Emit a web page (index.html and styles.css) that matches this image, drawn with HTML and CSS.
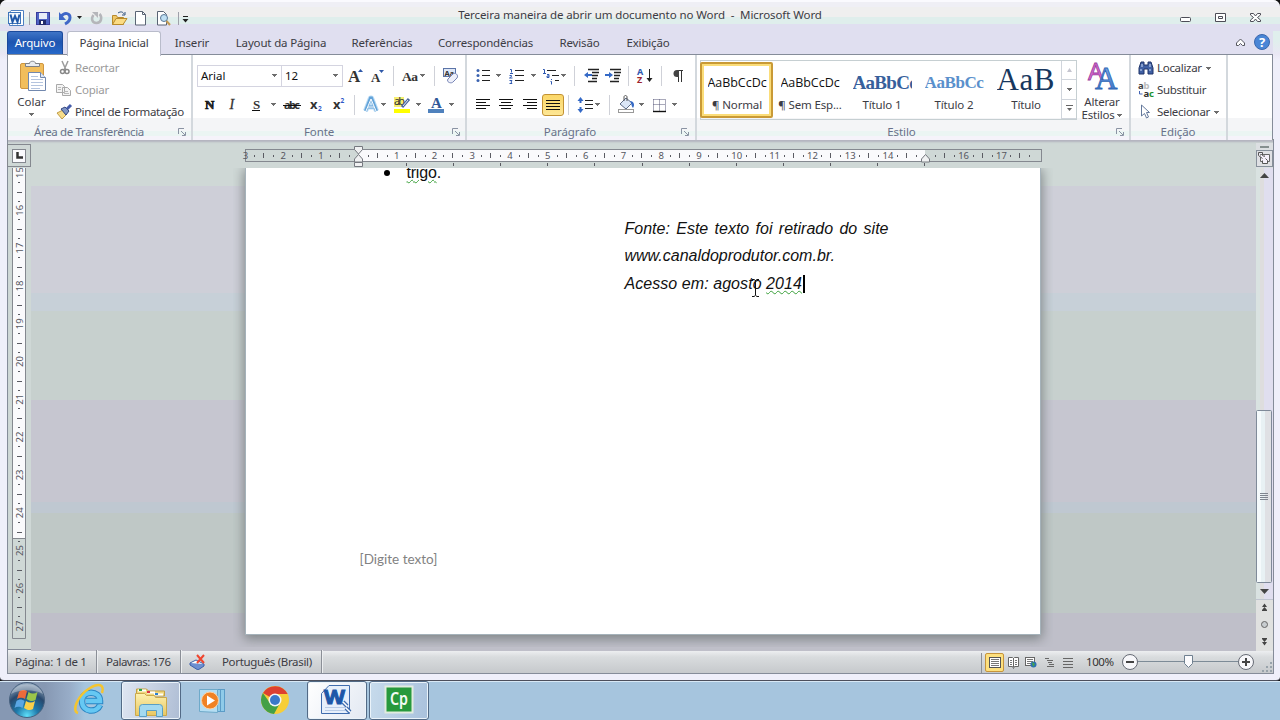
FILE: index.html
```html
<!DOCTYPE html>
<html lang="pt-BR">
<head>
<meta charset="utf-8">
<title>Terceira maneira de abrir um documento no Word - Microsoft Word</title>
<link rel="stylesheet" href="styles.css">
</head>
<body>
<svg width="0" height="0" class="defs">
  <defs>
    <linearGradient id="blueA" x1="0" y1="0" x2="0" y2="1"><stop offset="0" stop-color="#8cb4ea"/><stop offset="1" stop-color="#2f6cc4"/></linearGradient>
    <linearGradient id="folder" x1="0" y1="0" x2="0" y2="1"><stop offset="0" stop-color="#fdf1b0"/><stop offset="1" stop-color="#e8c763"/></linearGradient>
    <radialGradient id="orb" cx=".5" cy=".95" r=".9"><stop offset="0" stop-color="#5fe0fa"/><stop offset=".35" stop-color="#1f7aab"/><stop offset=".7" stop-color="#28486d"/><stop offset="1" stop-color="#8da3ba"/></radialGradient>
    <path id="dd" d="M0 0h5v1h-1v1h-1v1h-1v-1h-1v-1h-1z" fill="#6d6d6d"/>
    <path id="launch" d="M.5 6V.5H6M3 3l4 4M7.5 4v3.500H4" fill="none" stroke="#8a93a3"/>
  </defs>
</svg>
<div class="window">
  <header class="titlebar">
    <div class="quick">
      <svg width="185" height="24" viewBox="7 7 185 24">
        <path d="M11 10.500h12.500v15H9.500v-13z" fill="#fff" stroke="#4f7fc0"/><rect x="8.500" y="12.500" width="12" height="11" fill="#f4f8fd" stroke="#3f75ba"/><path d="M10.500 14.500l2 7.500 2.500-6 2.500 6 2-7.500" stroke="#2259a8" stroke-width="2" fill="none"/>
        <path d="M29.500 12v13" stroke="#9ea0aa"/>
        <rect x="36.500" y="12.500" width="13" height="12" fill="#5064c4" stroke="#3a3d9d"/><rect x="39" y="13" width="8" height="6" fill="#e9edf8"/><rect x="39" y="20" width="7" height="5" fill="#222b6c"/><rect x="41" y="21" width="2" height="3" fill="#fff"/>
        <path d="M61 16.500c4-5 9-3 9 1 0 3-2 5-5 6.500" fill="none" stroke="#4068c8" stroke-width="3"/><path d="M59 12v8h7z" fill="#4068c8"/><path d="M77 16h5l-2.500 3z" fill="#222"/>
        <path d="M93.500 15c-3 4-1 8 3 8 5 0 6-6 3-9" fill="none" stroke="#b5b6ba" stroke-width="2.500"/><path d="M92 12h6v6z" fill="#b5b6ba"/>
        <path d="M112.500 24.500v-9h4l1 2h6v7z" fill="#f0c765" stroke="#b88a2b"/><path d="M112.500 24.500l3.500-6h11l-4 6z" fill="#fbdc84" stroke="#b88a2b"/><path d="M118 13c3-2 5-1 6 1m1-2v3h-3" fill="none" stroke="#33557f"/>
        <path d="M135.500 11.500h7l3 3v10.500h-10z" fill="#fff" stroke="#5a6474"/><path d="M142.500 11.500v3h3" fill="none" stroke="#5a6474"/>
        <path d="M157.500 11.500h6l3 3v10.500h-9z" fill="#fff" stroke="#5a6474"/><circle cx="164" cy="18" r="3.500" fill="#bfe0f4" stroke="#5a7896"/><path d="M166.500 21l3.500 4" stroke="#c49a52" stroke-width="2"/>
        <path d="M178.500 12v13" stroke="#9ea0aa"/><path d="M183 16h5v1h-5zM182.500 19h6l-3 3.500z" fill="#222"/>
      </svg>
    </div>
    <h1>Terceira maneira de abrir um documento no Word&nbsp; -&nbsp; Microsoft Word</h1>
    <svg class="winbtns" width="110" height="24" viewBox="1163 7 110 24" fill="#fff" stroke="#4d4d57">
      <rect x="1180.500" y="17.500" width="10" height="4" rx="1"/>
      <path d="M1215.500 13.500h10v8h-10zM1218.500 16.500h4v2h-4z"/>
      <path d="M1250.500 13.500h3l2 2.500 2-2.500h3v1.500l-3 2.500 3 2.500v1.500h-3l-2-2.500-2 2.500h-3v-1.500l3-2.500-3-2.500z"/>
    </svg>
  </header>
  <nav class="tabs">
    <span class="file">Arquivo</span>
    <span class="tab on">Página Inicial</span>
    <span class="tab t1">Inserir</span>
    <span class="tab t2">Layout da Página</span>
    <span class="tab t3">Referências</span>
    <span class="tab t4">Correspondências</span>
    <span class="tab t5">Revisão</span>
    <span class="tab t6">Exibição</span>
    <svg class="help" width="45" height="23" viewBox="1228 31 45 23">
      <path d="M1236.500 43l4-4 4 4v2.500h-2l-2-2-2 2h-2z" fill="#fff" stroke="#55565f"/>
      <circle cx="1262" cy="42" r="7.500" fill="#4a86d6" stroke="#3a68ad"/><text x="1262" y="47" text-anchor="middle" font-size="13" font-weight="700" fill="#fff">?</text>
    </svg>
  </nav>

  <section class="ribbon">
    <div class="group clip">
      <div class="body">
        <div class="paste">
          <svg width="46" height="40" viewBox="7 54 46 40">
            <rect x="19.500" y="62.500" width="23" height="25" rx="1.500" fill="#f2be5c" stroke="#cf9640"/><path d="M24.500 65.500v-3h4c0-3 6-3 6 0h4v3z" fill="#e8ebf0" stroke="#7c8087"/>
            <path d="M27.500 71.500h12l5 5v13h-17z" fill="#fff" stroke="#7288ae"/><path d="M39.500 71.500v5h5" fill="#dde6f3" stroke="#7288ae"/><path d="M30 75.500h7M30 78.500h12M30 81.500h12M30 84.500h12M30 87.500h9" stroke="#b4c4de"/>
          </svg>
          <span>Colar</span>
          <svg width="5" height="3"><use href="#dd"/></svg>
        </div>
        <div class="stack">
          <div class="cmd off"><svg width="18" height="22" viewBox="55 57 18 22"><path d="M61 61l4 9M67 61l-4 9" stroke="#9b9b9b" stroke-width="1.500"/><circle cx="61.500" cy="71.500" r="2" fill="none" stroke="#888" stroke-width="1.500"/><circle cx="66" cy="71.500" r="2" fill="none" stroke="#888" stroke-width="1.500"/></svg>Recortar</div>
          <div class="cmd off"><svg width="18" height="22" viewBox="56 79 18 22"><path d="M56.500 84.500h6l2 2v6h-8zM62.500 87.500h5l3 3v5h-8z" fill="#f4f4f4" stroke="#a9a9a9"/><path d="M58 87.500h3M58 89.500h3M64 91.500h4M64 93.500h5" stroke="#b9b9b9"/></svg>Copiar</div>
          <div class="cmd"><svg width="18" height="22" viewBox="56 101 18 22"><path d="M57 113l6-3 4 4-5 5z" fill="#f6dc8a" stroke="#c29d46"/><path d="M61 109l4-2 4 4-3 4z" fill="#7f95c4" stroke="#34477e"/><path d="M67 109l4-4" stroke="#445caa" stroke-width="3"/></svg>Pincel de Formatação</div>
        </div>
      </div>
      <footer><span>Área de Transferência</span><svg width="8" height="8"><use href="#launch"/></svg></footer>
    </div>

    <div class="group font">
      <div class="body rows">
        <div class="row r1">
          <div class="combo c1">Arial<svg width="5" height="3"><use href="#dd"/></svg></div>
          <div class="combo c2">12<svg width="5" height="3"><use href="#dd"/></svg></div>
          <svg width="121" height="22" viewBox="343 65 121 22" class="sr">
            <text x="348" y="82" font-size="17" font-weight="700">A</text><path d="M358 72h5l-2.500-3z" fill="#2e58a8"/>
            <text x="371" y="82" font-size="13" font-weight="700">A</text><path d="M379 70h5l-2.500 3z" fill="#2e58a8"/>
            <path d="M393.500 66v20M434.500 66v20" stroke="#cfd1d8"/>
            <text x="402" y="81" font-size="13.500" font-weight="700" textLength="16">Aa</text><use href="#dd" x="420" y="74"/>
            <rect x="443.500" y="68.500" width="12" height="8" fill="#dfe8f7" stroke="#5b74a8"/><text x="444.500" y="76" font-size="7.500" class="sans" font-weight="700">Aa</text><path d="M448 79l5-5c2-2 6 1 4 4l-4 4c-2 2-7 0-5-3z" fill="#eef0fa" stroke="#7583b5"/>
          </svg>
        </div>
        <div class="row r2">
          <svg width="266" height="22" viewBox="197 94 266 22" class="sr">
            <text x="204" y="109" font-size="13" font-weight="700" stroke="#111" stroke-width=".7">N</text>
            <text x="228.500" y="109" font-size="14" font-style="italic" stroke="#333" stroke-width=".3">I</text>
            <text x="252" y="109" font-size="13" font-weight="700">S</text><path d="M251 110.500h8" stroke="#111"/><use href="#dd" x="270" y="103"/>
            <text x="283" y="109" font-size="11" font-weight="700" textLength="16" class="sans">abc</text><path d="M282 105.500h18" stroke="#111"/>
            <text x="309" y="109" font-size="13" class="sans" font-weight="700">x</text><text x="317" y="111" font-size="6.500" fill="#2e58c8" class="sans" font-weight="700">2</text>
            <text x="332" y="109" font-size="13" class="sans" font-weight="700">x</text><text x="339.500" y="103" font-size="6.500" fill="#2e58c8" class="sans" font-weight="700">2</text>
            <path d="M353.500 95v20" stroke="#cfd1d8"/>
            <path d="M364.500 111l5-13h1l5 13M367 107h6.500" fill="none" stroke="#bcdcf5" stroke-width="5" stroke-linejoin="round"/><path d="M364.500 111l5-13h1l5 13M367 107h6.500" fill="none" stroke="#62a3d9" stroke-width="3"/><path d="M365 111l5-12 5 12M367 107h6" fill="none" stroke="#fff"/><use href="#dd" x="380" y="103"/>
            <rect x="393" y="97" width="10" height="10" fill="#f6ee70"/><text x="393" y="105" font-size="11" class="sans" textLength="11">ab</text><path d="M401 107l7-8" stroke="#49679e" stroke-width="3"/><path d="M402 106l5-6" stroke="#e7eaf4"/><rect x="393" y="109" width="16" height="4" fill="#ff0"/><use href="#dd" x="415" y="103"/>
            <text x="430" y="108" font-size="15" fill="#2f5898" font-weight="700">A</text><rect x="427" y="109" width="16" height="4" fill="#4f81bd"/><use href="#dd" x="448" y="103"/>
          </svg>
        </div>
      </div>
      <footer><span>Fonte</span><svg width="8" height="8"><use href="#launch"/></svg></footer>
    </div>

    <div class="group para">
      <div class="body rows">
        <div class="row r1">
          <svg width="219" height="22" viewBox="472 65 219 22" class="lists">
            <g fill="#3a62b0"><circle cx="478" cy="70.500" r="1.500"/><circle cx="478" cy="75.500" r="1.500"/><circle cx="478" cy="80.500" r="1.500"/></g><path d="M482 70.500h8M482 75.500h8M482 80.500h8" stroke="#222"/><use href="#dd" x="496" y="74"/>
            <path d="M510 69.500h1.500v3M510 73.500h3M509.500 75.500h2v1l-2 1.500h3M509.500 80.500h2.500l-1 1.500 1 1.500h-2.500M543 69.500h1.500v4M543 73.500h3M547 74.500h2v3h-2v-1.500h2M551.500 79v1M550.500 81.500h1v3" fill="none" stroke="#2e58b0"/>
            <path d="M515 70.500h9M515 75.500h9M515 80.500h9M547 70.500h9M552 75.500h7M555 80.500h4" stroke="#222"/><use href="#dd" x="531" y="74"/><use href="#dd" x="561" y="74"/>
            <path d="M574.500 66v20M628.500 66v20M661.500 66v20" stroke="#cfd1d8"/>
            <path d="M588 69.500h11M592 72.500h7M592 75.500h6M592 78.500h5M588 81.500h9" stroke="#222" stroke-width="1.300"/><path d="M584 75l4-3v2h4v2h-4v2z" fill="#3469c6"/>
            <path d="M610 69.500h11M614 72.500h7M614 75.500h6M614 78.500h5M610 81.500h9" stroke="#222" stroke-width="1.300"/><path d="M613 75l-4-3v2h-4v2h4v2z" fill="#3469c6"/>
            <text x="637" y="75" font-size="9" font-weight="700" fill="#2e58b0">A</text><text x="637" y="83" font-size="9" font-weight="700" fill="#9c2430">Z</text><path d="M649.500 69v12" stroke="#222"/><path d="M646.500 78h6l-3 4z" fill="#222"/>
            <path d="M677 70.500h6M678.500 70v12M681.500 70v12" stroke="#333"/><path d="M679 70h-2a3.500 3.500 0 0 0 0 7h2z" fill="#444"/>
          </svg>
        </div>
        <div class="row r2">
          <svg width="70" height="22" viewBox="472 94 70 22" stroke="#111"><path d="M476 99.500h14M476 102.500h10M476 105.500h14M476 108.500h10M499 99.500h14M501 102.500h10M499 105.500h14M501 108.500h10M523 99.500h14M527 102.500h10M523 105.500h14M527 108.500h10"/></svg>
          <span class="just"><svg width="14" height="12" stroke="#111"><path d="M0 1.500h14M0 4.500h14M0 7.500h14M0 10.500h14"/></svg></span>
          <svg width="126" height="22" viewBox="564 94 126 22">
            <path d="M568.500 95v20M609.500 95v20" stroke="#cfd1d8"/>
            <path d="M580.500 99v4M580.500 107v4" stroke="#3469c6" stroke-width="2"/><path d="M577.500 101h6l-3-4zM577.500 109h6l-3 4z" fill="#3469c6"/><path d="M585 100.500h8M585 104.500h8M585 108.500h8" stroke="#222"/><use href="#dd" x="595" y="103"/>
            <path d="M620 104l6-6 6 5-6 6z" fill="#dbe6f6" stroke="#5c6b85"/><path d="M624 101v-4c0-2 3-2 3 0v4" fill="none" stroke="#555"/><path d="M630 101c4 0 5 4 3 7-2-2-1-4-3-7z" fill="#3469c6"/><rect x="618.500" y="109.500" width="15" height="3" fill="#fff" stroke="#999"/><use href="#dd" x="639" y="103"/>
            <path d="M653.500 99.500h12v11M653.500 99.500v11M659.500 99.500v11M653.500 104.500h12" fill="none" stroke="#557" stroke-dasharray="1 1"/><path d="M653 111.500h13" stroke="#111" stroke-width="1.400"/><use href="#dd" x="672" y="103"/>
          </svg>
        </div>
      </div>
      <footer><span>Parágrafo</span><svg width="8" height="8"><use href="#launch"/></svg></footer>
    </div>

    <div class="group style">
      <div class="body">
        <div class="gallery">
          <div class="st sel"><div class="pv">AaBbCcDc</div><span>¶ Normal</span></div>
          <div class="st"><div class="pv">AaBbCcDc</div><span>¶ Sem Esp...</span></div>
          <div class="st"><div class="pv h1">AaBbCc</div><span>Título 1</span></div>
          <div class="st"><div class="pv h2">AaBbCc</div><span>Título 2</span></div>
          <div class="st"><div class="pv big">AaB</div><span>Título</span></div>
          <div class="gs"><i><svg width="5" height="4"><path d="M0 4h5L2.500 0z" fill="#c5c5cf"/></svg></i><i><svg width="5" height="3"><use href="#dd"/></svg></i><i><svg width="7" height="7"><path d="M0 .5h7" stroke="#666"/><path d="M1 3h5l-2.500 3z" fill="#666"/></svg></i></div>
        </div>
        <div class="alter">
          <svg width="50" height="40" viewBox="1077 55 50 40" class="sr"><text x="1088" y="80" class="sans" font-size="24" fill="#d66bd0" stroke="#9a3fa0" stroke-width=".8">A</text><text x="1095" y="88.500" font-size="31" fill="url(#blueA)" stroke="#2e66b5" stroke-width=".8">A</text></svg>
          <span>Alterar</span>
          <span>Estilos <svg width="5" height="3"><use href="#dd"/></svg></span>
        </div>
      </div>
      <footer><span>Estilo</span><svg width="8" height="8"><use href="#launch"/></svg></footer>
    </div>

    <div class="group edit">
      <div class="body">
        <div class="stack">
          <div class="cmd"><svg width="20" height="22" viewBox="1136 57 20 22"><path d="M1141 62h3v3h4v-3h3l2 6v6h-5v-5h-4v5h-5v-6z" fill="#3f5fa3" stroke="#203568"/><path d="M1140 70h2M1149 70h2M1142 64v3M1150 64v3" stroke="#cfe0fa"/></svg>Localizar<svg width="5" height="3" class="ml"><use href="#dd"/></svg></div>
          <div class="cmd"><svg width="20" height="22" viewBox="1136 79 20 22" class="sans"><text x="1138" y="89" font-size="9.500" font-weight="700" fill="#444">a<tspan fill="#bbb">b</tspan></text><text x="1143.500" y="97" font-size="9.500" font-weight="700" fill="#333">a<tspan fill="#1d9331">c</tspan></text><path d="M1139.500 91v3h3" fill="none" stroke="#4465b5"/></svg>Substituir</div>
          <div class="cmd"><svg width="20" height="22" viewBox="1136 101 20 22"><path d="M1141.500 105v11l3-2.500 2 4.500 2-1-2-4.500h3z" fill="#fff" stroke="#64799c"/></svg>Selecionar<svg width="5" height="3" class="ml"><use href="#dd"/></svg></div>
        </div>
      </div>
      <footer><span>Edição</span></footer>
    </div>
    <div class="group rest"><div class="body"></div><footer></footer></div>
  </section>

  <main class="work">
    <div class="left">
      <div class="tabsel"><i><svg width="7" height="7"><path d="M1.500 0v5.500H7" fill="none" stroke="#333" stroke-width="2.500"/></svg></i></div>
      <svg id="vruler" width="24" height="483" viewBox="7 168 24 483"></svg>
    </div>
    <div class="center">
      <svg id="hruler" width="1225" height="25" viewBox="31 143 1225 25"></svg>
      <div class="canvas">
        <article class="page">
          <p class="li"><b></b><span class="wavy">trigo</span>.</p>
          <div class="quote">
            <p class="j">Fonte: Este texto foi retirado do site</p>
            <p class="url">www.canaldoprodutor.com.br.</p>
            <p class="date">Acesso em: agosto <span class="wavy">2014</span><i class="caret"></i></p>
          </div>
          <svg class="ibeam" width="9" height="18" fill="none" stroke="#111"><path d="M1 .5h2l1.500 1L6 .5h2M4.500 1v15M1 17.500h2l1.500-1 1.500 1h2"/></svg>
          <div class="foot">[Digite texto]</div>
        </article>
      </div>
    </div>
    <svg class="scroll" width="17" height="508" viewBox="1256 143 17 508">
      <rect x="1256" y="143" width="17" height="25" fill="#dcdfe2"/><rect x="1260" y="146" width="9" height="2" fill="#858f8f"/>
      <rect x="1256.500" y="150.500" width="16" height="16" fill="#dfe0e4" stroke="#87909b"/><path d="M1260.500 154.500h9v7h-9z" fill="#f5f0fa" stroke="#666"/><path d="M1258.500 152.500h4v3l2 1v-1M1258.500 152.500v3l4 3M1262.500 160.500v3h5v-3l-2-2" fill="#f5f0fa" stroke="#555"/>
      <rect x="1256" y="168" width="4" height="431" fill="#d9e2e1"/><rect x="1260" y="168" width="4" height="431" fill="#deddde"/><rect x="1264" y="168" width="9" height="431" fill="#e0deef"/>
      <path d="M1260 178h9l-4.500-5z" fill="#444"/>
      <rect x="1256.500" y="410.500" width="15" height="172" rx="1" fill="#e8f1f4" stroke="#7f8a99"/><rect x="1257" y="411" width="4" height="171" fill="#f5fafc"/><rect x="1265" y="411" width="6" height="171" fill="#dfe0e4"/>
      <path d="M1260 493.500h8M1260 495.500h8M1260 497.500h8M1260 499.500h8" stroke="#7f858f"/>
      <path d="M1260 589h9l-4.500 5z" fill="#444"/>
      <rect x="1256" y="599" width="17" height="52" fill="#e0e1e0"/><path d="M1256 599.500h17" stroke="#c0c5d0"/>
      <path d="M1262 607h5l-2.500-3.500zM1262 610h5l-2.500-3zM1262 610h5v1h-5zM1262 639h5l-2.500 3zM1262 642h5l-2.500 3.500zM1262 638h5v1h-5z" fill="#444"/><circle cx="1264.500" cy="624.500" r="3" fill="#c8cdd0" stroke="#666"/>
    </svg>
  </main>

  <div class="status">
    <span class="s1">Página: 1 de 1</span><span class="s2">Palavras: 176</span>
    <span class="s3"><svg width="17" height="16" viewBox="189 654 17 16"><path d="M190 663l6-3 8 4-6 4z" fill="#fff" stroke="#3d5fa8"/><path d="M190 663v2l8 5 6-4v-2" fill="#6d8fd0" stroke="#3d5fa8"/><path d="M197 655l7 8M204 655l-7 8" stroke="#ef4630" stroke-width="2"/></svg></span>
    <span class="s4">Português (Brasil)</span>
    <svg class="views" width="292" height="22" viewBox="981 652 292 22">
      <path d="M981.500 653v20" stroke="#8b8f97"/>
      <rect x="985.500" y="653.500" width="18" height="18" rx="1.500" fill="#fde07e" stroke="#c6943c"/><rect x="989.500" y="657.500" width="11" height="10" fill="#fff" stroke="#555"/><path d="M991 659.500h8M991 661.500h8M991 663.500h8M991 665.500h8" stroke="#777"/>
      <path d="M1008.500 657.500h4l1 1 1-1h4v9h-4l-1 2-1-2h-4zM1013.500 658v9" fill="#fff" stroke="#666"/><path d="M1010 660.500h2M1010 662.500h2M1015 660.500h2M1015 662.500h2M1015 664.500h2M1010 664.500h2" stroke="#777"/>
      <rect x="1025.500" y="657.500" width="9" height="8" fill="#fff" stroke="#666"/><path d="M1027 659.500h6M1027 661.500h6M1027 663.500h4" stroke="#777"/><circle cx="1033.500" cy="664.500" r="3" fill="#2c6fb4"/><path d="M1032 662l3 2-2 3z" fill="#45a848"/>
      <path d="M1045 658.500h4M1047 660.500h6M1048 662.500h4M1049 664.500h5M1047 666.500h7M1063 658.500h10M1063 661.500h10M1063 664.500h10M1063 667.500h10" stroke="#666"/>
      <text x="1086" y="666" font-size="11.500" textLength="28" fill="#333">100%</text>
      <path d="M1137 661.500h101" stroke="#7d8b97"/>
      <circle cx="1130" cy="662" r="7.500" fill="#f7f7fa" stroke="#666b75"/><path d="M1126 662h8" stroke="#444" stroke-width="2"/>
      <circle cx="1246" cy="662" r="7.500" fill="#f7f7fa" stroke="#666b75"/><path d="M1242 662h8M1246 658v8" stroke="#444" stroke-width="2"/>
      <path d="M1184.500 655.500h8v8l-4 4-4-4z" fill="#fbfbfd" stroke="#6f8090"/>
      <path d="M1262 671h2M1266 671h2M1270 671h2M1266 667h2M1270 667h2M1270 663h2" stroke="#98a3ab" stroke-width="2"/>
    </svg>
  </div>
</div>

<footer class="taskbar">
  <svg width="121" height="40" viewBox="0 680 121 40">
    <circle cx="27" cy="700" r="17.500" fill="url(#orb)" stroke="#47617f"/>
    <path d="M19 692c3-3 6-2 8-1l-2 8c-3-2-6-1-8 0z" fill="#ec6a3a"/><path d="M28.500 692c3 2 6 2 9 0l-2 8c-3 2-6 1-9-1z" fill="#9bc54a"/><path d="M16.500 701c3-2 5-2 8 0l-2 7c-2-1-5-2-8 0z" fill="#5aa6e4"/><path d="M26 701c3 2 6 2 9 0l-2 8c-3 2-6 1-9-1z" fill="#fbd04a"/>
    <path d="M11 694c4-13 28-13 32 0-9-5-23-5-32 0z" fill="#fff" opacity=".3"/>
    <path d="M100 705c-3 8-18 8-18-4 0-11 18-11 18 0H86" fill="none" stroke="#2a86c4" stroke-width="6.500"/><path d="M100 705c-3 8-18 8-18-4 0-11 18-11 18 0H86" fill="none" stroke="#66c8f3" stroke-width="4.500"/><path d="M78 713c-7-2 0-18 12-25 8-5 15-4 12 5" fill="none" stroke="#f4c52f" stroke-width="2.500"/>
  </svg>
  <div class="tb a"><svg width="58" height="38" viewBox="122 681 58 38"><path d="M136.500 691v-3h10l2 2h16v5h-28z" fill="#f0d77e" stroke="#c2a045"/><path d="M138 689.500h8M147 691.500h8M154 693.500h9" stroke="#fff" stroke-width="2"/><path d="M139 689h3" stroke="#2aa047" stroke-width="2"/><path d="M147 691h3" stroke="#d34" stroke-width="2"/><path d="M155 693h3" stroke="#2a80d0" stroke-width="2"/><path d="M135.500 692.500h9l2 2h8l1 2h11v18h-31z" fill="url(#folder)" stroke="#cba94b"/><path d="M139.500 715.500v-9q0-3 3-3h17q3 0 3 3v9h-6v-6h-10v6z" fill="#a3d9f0" stroke="#5a9fc4"/></svg></div>
  <svg width="126" height="40" viewBox="181 680 126 40">
    <rect x="208.500" y="689.500" width="16" height="22" fill="#8fcbe9" stroke="#5b9cc7"/><path d="M220.500 690v22" stroke="#5b9cc7"/><path d="M199.500 689.500h18v23l-18-1z" fill="#b5def3" stroke="#6eaaca"/><circle cx="210" cy="700.500" r="8.500" fill="#f08224" stroke="#fcd3a6"/><path d="M207 695.500l8 5-8 5z" fill="#fff"/>
    <circle cx="275" cy="700" r="14" fill="#f6ce38"/><path d="M263 693a14 14 0 0 1 24.600 1H275v6z" fill="#dd4030"/><path d="M262.900 693A14 14 0 0 0 274 714l6-11-5-3-5 3z" fill="#43a047"/><circle cx="275" cy="700" r="6.500" fill="#f3f6f9"/><circle cx="275" cy="700" r="5" fill="#3b78c9"/>
  </svg>
  <div class="tb b"><svg width="58" height="38" viewBox="308 681 58 38"><path d="M329 684.500h20.500v28H321.500v-20z" fill="#e6effb" stroke="#3f6cae"/><path d="M325 709.500h20M325 706.500h20" stroke="#b8cbe6"/><text x="324" y="703" font-size="19" font-weight="700" fill="#1d57a8" stroke="#1d57a8" textLength="21" lengthAdjust="spacingAndGlyphs">W</text><path d="M343 701l4 4M346 707l4 4" stroke="#3f6cae" stroke-width="4"/><path d="M343 701l4 4M346 707l4 4" stroke="#fff" stroke-width="1.500"/></svg></div>
  <div class="tb c"><svg width="58" height="38" viewBox="370 681 58 38"><rect x="385.500" y="685.500" width="27" height="26" fill="#27993c" stroke="#e2ecdf" stroke-width="2"/><text x="390" y="704" font-size="18" font-weight="600" fill="#f3faf3" textLength="18" lengthAdjust="spacingAndGlyphs">Cp</text></svg></div>
</footer>
<script src="ruler.js"></script>
</body>
</html>
```
FILE: styles.css
```css
* { box-sizing: border-box; }
body { margin: 0; width: 1280px; height: 720px; overflow: hidden; background: #111; font-family: "Noto Sans", "Open Sans", sans-serif; font-size: 11.5px; color: #3c3c44; }
h1, p { margin: 0; }
i { font-style: normal; }
svg { display: block; flex: none; }
.defs { position: absolute; }
.sr text { font-family: "Liberation Serif", serif; }
.sr text:not([fill]) { fill: #333; }
.sr text.sans, .sans text { font-family: "Noto Sans", sans-serif; }

.window { height: 681px; padding: 0 7px; border-radius: 7px 7px 4px 4px; border-bottom: 1px solid #4c4f5c; background: linear-gradient(#efefef 0 29px, #e0efed 29px 41px, #e9e7f4 54px, #efeffa 60px); overflow: hidden; }
.titlebar { display: flex; height: 31px; margin: 0 -7px; padding: 0 7px; border-top: 2px solid #fafafe; background: linear-gradient(#efeff5 0 5px, #efefef 5px 15px, #dfeeec 15px 22px, #e0dff0 22px); }
.quick { width: 185px; padding-top: 5px; }
.titlebar h1 { flex: 1; padding: 5px 75px 0 0; text-align: center; font-size: 11.5px; font-weight: 400; line-height: 16px; letter-spacing: -.09px; }
.winbtns { margin-top: 5px; }

.tabs { display: flex; height: 23px; background: #e0dff0; line-height: 23px; font-size: 11.5px; letter-spacing: -.16px; text-align: center; }
.tabs > * { white-space: nowrap; }
.file { width: 56px; border-radius: 3px 3px 0 0; color: #fff; background: linear-gradient(#3f74c6, #1e55b0 45%, #2668c9); border: 1px solid #1b4a9c; border-bottom: 0; line-height: 22px; }
.on { width: 94px; margin-left: 4px; height: 25px; background: #fff; border: 1px solid #b9bccb; border-bottom: 0; border-radius: 3px 3px 0 0; position: relative; line-height: 22px; letter-spacing: -.22px; }
.t1 { width: 62px; } .t2 { width: 116px; } .t3 { width: 86px; } .t4 { width: 121px; } .t5 { width: 67px; } .t6 { width: 70px; }
.help { margin-left: auto; }

.ribbon { display: flex; height: 86px; border: 1px solid #858c99; border-bottom: 0; background: #fff; }
.group { height: 85px; border-right: 2px solid #d3d8dd; flex: none; }
.body { height: 63px; display: flex; }
.group footer { height: 22px; display: flex; align-items: center; background: linear-gradient(#f4f5f7 0 13px, #ebf5f3 13px 18px, #f5f3fa 18px); color: #69718a; line-height: 20px; padding: 6px 5px 0 0; letter-spacing: -.1px; }
.group footer span { flex: 1; text-align: center; }
.group footer svg { margin-top: -1px; }
.group.clip footer { letter-spacing: -.35px; }
.group.clip footer span { padding-right: 8px; }
.clip footer svg { margin-right: 0; }
.para footer svg { margin-right: 1px; }
.style footer span { padding-right: 10px; }
.para footer span { padding-right: 8px; }
.font footer span { padding-right: 7px; }
.edit footer span { padding-left: 4px; }
.clip { width: 185px; } .font { width: 274px; } .para { width: 230px; } .style { width: 434px; } .edit { width: 97px; } .rest { flex: 1; border: 0; }
.paste { width: 46px; display: flex; flex-direction: column; align-items: center; line-height: 13px; padding-left: 1px; }
.paste > svg:first-child { margin-left: -1px; }
.paste span { margin-bottom: 5px; }
.stack { padding: 2px 0 0 2px; }
.cmd { display: flex; align-items: center; height: 22px; gap: 1px; white-space: nowrap; line-height: 22px; letter-spacing: -.36px; }
.off { color: #9b9b9b; letter-spacing: -.25px; }
.edit .cmd { letter-spacing: -.3px; }
.ml { margin-left: 3px; }
.rows { flex-direction: column; }
.row { display: flex; height: 22px; }
.font .row, .para .row { padding-left: 4px; }
.font .r2 { padding-left: 5px; }
.r1 { margin-top: 10px; }
.r2 { margin-top: 7px; }
.para .r1, .para .r2 { padding-left: 5px; }
.combo { height: 22px; border: 1px solid #d4d4e0; padding: 0 4px 1px 3px; display: flex; align-items: center; justify-content: space-between; color: #111; line-height: 18px; }
.c1 { width: 85px; } .c2 { width: 61px; border-left: 0; }
.lists text { font-family: "Noto Sans", sans-serif; }
.just { width: 22px; height: 22px; border: 1px solid #c39233; border-radius: 3px; background: linear-gradient(#fbd768, #fde694); display: flex; align-items: center; justify-content: center; }

.gallery { display: flex; width: 377px; height: 60px; margin: 5px 0 0 3px; border: 1px solid #c6cfd2; }
.st { width: 72px; height: 58px; padding: 5px 2px 0 4px; text-align: center; flex: none; white-space: nowrap; line-height: 14px; letter-spacing: -.15px; }
.st.sel { border: 2px solid #c99a36; box-shadow: inset 0 0 0 2px #fbdd79; border-radius: 2px; width: 73px; height: 56px; margin-top: 1px; padding: 2px 2px 0 3px; margin-left: -1px; }
.pv { width: 59px; height: 32px; margin: 0 auto; overflow: hidden; text-align: left; color: #111; font: 12.5px/33px "Open Sans", sans-serif; letter-spacing: -.05px; }
.h1 { font: bold 19px/33px "Liberation Serif", serif; color: #36609c; letter-spacing: -.7px; }
.h2 { font: bold 17px/33px "Liberation Serif", serif; color: #5a90cc; letter-spacing: -.4px; }
.big { font: 31px/27px "Liberation Serif", serif; color: #17375e; letter-spacing: .5px; }
.gs { flex: 1; display: grid; grid-template-rows: 1fr 1fr 1fr; background: #fff; }
.gs i { border: 1px solid #d0d5dc; border-width: 0 0 1px 1px; display: flex; align-items: center; justify-content: center; }
.alter { width: 50px; text-align: center; line-height: 13px; letter-spacing: -.2px; }
.alter svg { display: inline-block; vertical-align: middle; }
.alter > svg { display: block; }
.alter span { display: block; white-space: nowrap; }
.edit .stack { padding-left: 5px; }

.work { display: flex; width: 1267px; height: 511px; border: 1px solid #858c99; border-top-color: #8a9494; background: #cfd8d6; margin-top: -1px; padding-top: 3px; box-shadow: inset 0 3px 2px -1px #b4b4bf; }
.left { width: 23px; }
.left svg { margin-left: -1px; }
.tabsel { width: 24px; height: 23px; margin: 1px 0 1px -1px; border: 1px solid #84888f; display: flex; align-items: center; justify-content: center; }
.tabsel i { width: 14px; height: 14px; border: 1px solid #84888f; background: #fafafd; display: flex; align-items: center; justify-content: center; }
.tabsel svg { margin: 0; }
.center { width: 1225px; }
.canvas { height: 483px; overflow: hidden; display: flex; justify-content: flex-start; padding-left: 215px; background: linear-gradient(#cfd8d6 0 18px, #cecfd8 18px 125px, #c7d0d8 125px 143px, #c7d0ce 143px 232px, #c6c6d0 232px 334px, #bfc8d1 334px 345px, #bfc8c6 345px 445px, #bfbfc9 445px); }
.page { width: 794px; height: 466px; background: #fff; box-shadow: 0 0 0 1px #a5b2ba, 0 3px 11px 2px #7e8486; clip-path: inset(0 -13px -13px -13px); font: 16px/27.600px "Liberation Sans", sans-serif; color: #111; position: relative; }
.li { height: 47px; margin-top: -9px; padding-left: 160.5px; position: relative; letter-spacing: -.2px; }
.li b { position: absolute; left: 138px; top: 11px; width: 6px; height: 6px; border-radius: 50%; background: #000; }
.quote { margin: 9px 0 0 378.5px; width: 264px; font-style: italic; white-space: nowrap; }
.j { text-align: justify; text-align-last: justify; }
.url { margin: -.6px 0 .6px; }
.date { letter-spacing: .06px; }
.wavy { text-decoration: underline wavy #3aa03a 1px; text-underline-offset: 1px; }
.caret { display: inline-block; width: 2px; height: 18px; background: #000; vertical-align: -4px; margin-left: 1px; }
.ibeam { position: absolute; left: 505px; top: 111px; }
.foot { position: absolute; left: 113.5px; top: 377px; font: 13.500px/28px Lato, sans-serif; color: #828282; }

.status { display: flex; height: 24px; width: 1267px; border: 1px solid #858c99; border-top: 0; background: linear-gradient(#f0f1f3, #d9dcde 30%, #c6c9cc); line-height: 23px; }
.status > span { border-right: 1px solid #8b8f97; box-shadow: 1px 0 #eceef0; white-space: nowrap; letter-spacing: -.34px; }
.s1 { width: 89px; padding-left: 7px; } .s2 { width: 84px; padding-left: 9px; } .s3 { width: 33px; padding: 4px 0 0 8px; }
.status .s1 { letter-spacing: -.3px; }
.status .s2 { letter-spacing: -.5px; }
.status .s3 { border: 0; box-shadow: none; }
.s4 { width: 108px; padding-left: 8px; }
.views { margin-left: auto; margin-top: 2px; }

.taskbar { height: 39px; display: flex; border-top: 1px solid #d8e9f6; background: linear-gradient(90deg, #8698b3 0 45px, #98adc8 70px, #a6c5de 85px); }
.taskbar > svg { margin-top: -2px; }
.tb { width: 60px; height: 39px; margin-top: -1px; border: 1px solid #526a86; border-radius: 3px; box-shadow: inset 0 0 0 1px #eaf3fa; background: linear-gradient(100deg, #dfe6f2, #aebdd4); }
.b { background: linear-gradient(120deg, #fff, #e2e8f2); }
.c { margin-left: 2px; background: linear-gradient(100deg, #c7dbec, #a9c1dc); }
```
FILE: ruler.js
```js
const CM = 37.8;
const tick = (d, color = '#5a5b62') => `<path d="${d}" stroke="${color}" fill="none"/>`;

// Horizontal ruler: centimetres counted outwards from the left indent.
let h = `<rect x="245.500" y="149.500" width="796" height="12" fill="#cfd8d6" stroke="#84888f"/>
<rect x="359" y="150" width="566" height="11" fill="#fafafc"/>`;
for (let n = -3; n <= 17; n++) {
  const x = 358.8 + n * CM;
  if (n !== 0 && n !== 15) h += `<text x="${x}" y="159" class="num" text-anchor="middle" font-size="9.5" fill="#55565e">${Math.abs(n)}</text>`;
  const q = v => Math.round(x + v) + .5;
  h += tick(`M${q(9)} 155v2M${q(18)} 153v5M${q(28)} 155v2`);
}
for (let x = 406; x < 925; x += 47.1) h += tick(`M${Math.round(x)}.5 163v3`);
h += `<path d="M354.500 146.500h8v3l-4 4.500-4-4.500zM354.500 162v-3l4-4.500 4 4.500v3zM354.500 162.500h8v4h-8z" fill="#f0f1f2" stroke="#75787f"/>
<path d="M921.500 162v-3l4-4.500 4 4.500v3z" fill="#f0f1f2" stroke="#75787f"/>`;
document.getElementById('hruler').innerHTML = h;

// Vertical ruler: the lower margin starts at the grey part.
let v = `<path d="M12.500 168v470.500h13V168" fill="#cfd8d6" stroke="#84888f"/>
<rect x="13" y="168" width="12" height="370" fill="#fafafc"/><path d="M12 538.500h14" stroke="#84888f"/>`;
for (let n = 15; n <= 27; n++) {
  const y = 172.5 + (n - 15) * CM;
  v += `<text transform="translate(23 ${y}) rotate(-90)" text-anchor="middle" font-size="9.5" fill="#55565e">${n}</text>`;
  if (n < 27) {
    const q = d => Math.round(y + d) + .5;
    v += tick(`M18 ${q(9)}h2M17 ${q(19)}h5M18 ${q(28)}h2`);
  }
}
document.getElementById('vruler').innerHTML = v;
```
